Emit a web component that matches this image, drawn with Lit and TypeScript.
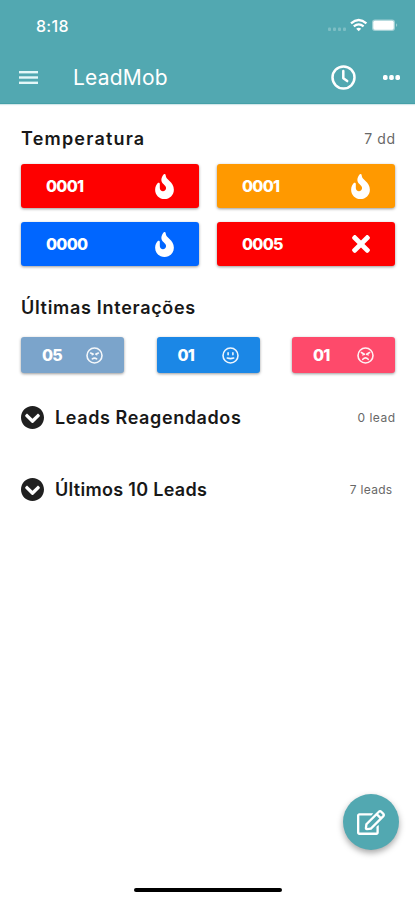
import { LitElement, html, css, svg } from "lit";
import { customElement, property } from "lit/decorators.js";

const FIRE = "M216 23.86c0-23.8-30.65-32.77-44.15-13.04C48 191.85 224 200 224 288c0 35.63-29.11 64.46-64.85 63.99-35.17-.45-63.15-29.77-63.15-64.94v-85.51c0-21.7-26.47-32.23-41.43-16.5C27.8 213.16 0 261.33 0 320c0 105.87 86.13 192 192 192s192-86.13 192-192c0-170.29-168-193-168-296.14z";
const TIMES = "M242.72 256l100.07-100.07c12.28-12.28 12.28-32.19 0-44.48l-22.24-22.24c-12.28-12.28-32.19-12.28-44.48 0L176 189.28 75.93 89.21c-12.28-12.28-32.19-12.28-44.48 0L9.21 111.45c-12.28 12.28-12.28 32.19 0 44.48L109.28 256 9.21 356.07c-12.28 12.28-12.28 32.19 0 44.48l22.24 22.24c12.28 12.28 32.2 12.28 44.48 0L176 322.72l100.07 100.07c12.28 12.28 32.2 12.28 44.48 0l22.24-22.24c12.28-12.28 12.28-32.19 0-44.48L242.72 256z";
const CHEVRON = "M504 256c0 137-111 248-248 248S8 393 8 256 119 8 256 8s248 111 248 248zM273 369.9l135.5-135.5c9.4-9.4 9.4-24.6 0-33.9l-17-17c-9.4-9.4-24.6-9.4-33.9 0L256 285.1 154.4 183.5c-9.4-9.4-24.6-9.4-33.9 0l-17 17c-9.4 9.4-9.4 24.6 0 33.9L239 369.9c9.4 9.4 24.6 9.4 34 0z";
const EDIT = "M402.3 344.9l32-32c5-5 13.7-1.5 13.7 5.7V464c0 26.5-21.5 48-48 48H48c-26.5 0-48-21.5-48-48V112c0-26.5 21.5-48 48-48h273.5c7.1 0 10.7 8.6 5.7 13.7l-32 32c-1.5 1.5-3.5 2.3-5.7 2.3H48v352h352V350.5c0-2.1.8-4.1 2.3-5.6zm156.6-201.8L296.3 405.7l-90.4 10c-26.2 2.9-48.5-19.2-45.6-45.6l10-90.4L432.9 17.1c22.9-22.9 59.9-22.9 82.7 0l43.2 43.2c22.9 22.9 22.9 60 .1 82.8zM460.1 174L402 115.9 216.2 301.8l-7.3 65.3 65.3-7.3L460.1 174zm64.8-79.7l-43.2-43.2c-4.1-4.1-10.8-4.1-14.8 0L436 82l58.1 58.1 30.9-30.9c4-4.2 4-10.8-.1-14.9z";

@customElement("mood-face")
class MoodFace extends LitElement {
  @property() mood = "angry";
  static styles = css`
    :host { display: block; width: 17px; height: 17px; }
    svg { display: block; fill: none; stroke: #fff; stroke-width: 1.6; stroke-linecap: round; opacity: 0.92; }
  `;
  render() {
    const parts: Record<string, unknown> = {
      annoyed: svg`<path d="M4.6 6l2.5 1.1M12.4 6L9.9 7.1M6.2 7.4v.4M10.8 7.4v.4M6.3 11.9q2.2-1.5 4.4 0"/>`,
      neutral: svg`<path d="M6.1 5.8v1.9M10.9 5.8v1.9M5.3 11.1q3.2 1 6.4 0"/>`,
      angry: svg`<path d="M4.4 5.5l3 1.8M12.6 5.5l-3 1.8M5.9 7.6v.4M11.1 7.6v.4M5.8 12.3q2.7-2.8 5.4 0"/>`,
    };
    return html`<svg width="17" height="17" viewBox="0 0 17 17"><circle cx="8.5" cy="8.5" r="7.5"/>${parts[this.mood]}</svg>`;
  }
}

@customElement("app-root")
class AppRoot extends LitElement {
  static styles = css`
    :host { display: block; }
    .screen { position: relative; box-sizing: border-box; width: 415px; height: 900px; overflow: hidden; background: #fff; color: #181818; font-family: Inter, "Open Sans", sans-serif; }
    svg { display: block; }
    header { height: 104px; background: #52a8b1; color: #fff; box-shadow: inset 0 -1px #45a0a8, 0 1px 1px #d4e8ea; }
    .status { display: flex; align-items: center; height: 50px; padding: 0 16px 0 36px; }
    .time { font-size: 16px; font-weight: 500; letter-spacing: 0.3px; padding-top: 1px; }
    .signals { margin-left: auto; display: flex; align-items: center; }
    .bar { display: flex; align-items: center; height: 54px; padding: 0 15px 0 19px; }
    .title { margin-left: 35px; font-size: 21px; line-height: 30px; flex: 1; letter-spacing: 0.2px; padding-top: 2px; }
    .more { margin-left: 27px; }
    main { padding: 0 20px 0 21px; }
    .head { display: flex; justify-content: space-between; align-items: center; height: 60px; padding-top: 9px; box-sizing: border-box; }
    .head.second { height: 71px; padding-top: 13px; }
    h2 { margin: 0; font-size: 18px; line-height: 24px; font-weight: 600; white-space: nowrap; }
    .temperature { letter-spacing: 1.2px; }
    .interactions { letter-spacing: 0.7px; }
    .note { font-size: 13px; color: #686868; }
    .days { font-size: 14px; letter-spacing: 0.6px; margin-right: -0.6px; }
    .grid { display: grid; grid-template-columns: 178px 178px; gap: 14px 18px; }
    .card { display: flex; align-items: center; justify-content: space-between; box-sizing: border-box; height: 44px; padding: 0 25px; border-radius: 3px; color: #fff; font-weight: 800; font-size: 16px; letter-spacing: -0.7px; box-shadow: 0 1px 3px rgba(0, 0, 0, 0.4); }
    .hot { background: #fe0000; }
    .warm { background: #ff9900; }
    .cold { background: #0066ff; }
    .moods { display: flex; justify-content: space-between; }
    .mood { width: 103px; height: 36px; padding: 0 21px; }
    .steel { background: #7ba4cb; }
    .azure { background: #1b87e6; }
    .rose { background: #fe4a6b; }
    .section { display: flex; align-items: center; height: 72px; }
    .section h2 { margin-left: 11px; flex: 1; padding-top: 2px; }
    .section .note { font-size: 12px; letter-spacing: 0.5px; padding-top: 1px; }
    .first { margin-top: 8px; }
    .first .note { margin-right: -0.5px; }
    .rescheduled { letter-spacing: 0.6px; }
    .latest { letter-spacing: 0.3px; }
    .last .note { margin-right: 2.5px; letter-spacing: 0.3px; }
    .fab { position: absolute; left: 343px; top: 794px; width: 56px; height: 56px; border-radius: 50%; background: #52a8b1; display: flex; align-items: center; justify-content: center; box-shadow: 0 3px 6px rgba(0, 0, 0, 0.35); }
    .home { position: absolute; left: 134px; top: 888px; width: 148px; height: 4px; border-radius: 2px; background: #000; }
  `;
  fire() {
    return html`<svg width="19" height="25" viewBox="0 0 384 512" fill="#fff"><path d=${FIRE} /></svg>`;
  }
  chevron() {
    return html`<svg width="23" height="23" viewBox="8 8 496 496" fill="#202020"><path d=${CHEVRON} /></svg>`;
  }
  render() {
    return html`<div class="screen">
      <header>
        <div class="status">
          <span class="time">8:18</span>
          <div class="signals">
            <svg width="72" height="14" viewBox="0 0 72 14" fill="#fff">
              <g opacity=".25"><rect x="1" y="9.5" width="3" height="3.5" rx="1"/><rect x="6" y="9.5" width="3" height="3.5" rx="1"/><rect x="11" y="9.5" width="3" height="3.5" rx="1"/><rect x="16" y="9.5" width="3" height="3.5" rx="1"/></g>
              <g fill="none" stroke="#fff" stroke-width="2.3"><path d="M24 5.4Q31.7-1.4 39.4 5.4M26.8 8.4Q31.7 4.3 36.6 8.4"/></g>
              <path d="M29.2 10.7q2.5-2 5 0l-2.5 2.6z"/>
              <rect x="45" y="1.5" width="23" height="11.5" rx="3" opacity=".45"/><rect x="46.3" y="2.8" width="20.4" height="8.9" rx="1.6"/>
              <path d="M69.2 5.3q2 1.8 0 3.8z" opacity=".5"/>
            </svg>
          </div>
        </div>
        <div class="bar">
          <svg width="19" height="13" viewBox="0 0 19 13" fill="#e4f7f8"><rect y="0" width="19" height="2.4"/><rect y="5.3" width="19" height="2.4"/><rect y="10.6" width="19" height="2.4"/></svg>
          <span class="title">LeadMob</span>
          <svg width="25" height="25" viewBox="0 0 25 25" fill="none" stroke="#fff"><circle cx="12.5" cy="12.5" r="11" stroke-width="2.5"/><path d="M12.3 6v7.3l3.9 2.8" stroke-width="2.5" stroke-linecap="round" stroke-linejoin="round"/></svg>
          <svg class="more" width="17" height="5" viewBox="0 0 17 5" fill="#fff"><rect width="4.6" height="5" rx="1.7"/><rect x="6.2" width="4.6" height="5" rx="1.7"/><rect x="12.4" width="4.6" height="5" rx="1.7"/></svg>
        </div>
      </header>
      <main>
        <div class="head"><h2 class="temperature">Temperatura</h2><span class="note days">7 dd</span></div>
        <div class="grid">
          <div class="card hot"><span>0001</span>${this.fire()}</div>
          <div class="card warm"><span>0001</span>${this.fire()}</div>
          <div class="card cold"><span>0000</span>${this.fire()}</div>
          <div class="card hot"><span>0005</span><svg width="18" height="26" viewBox="0 0 352 512" fill="#fff"><path d=${TIMES} /></svg></div>
        </div>
        <div class="head second"><h2 class="interactions">Últimas Interações</h2></div>
        <div class="moods">
          <div class="card mood steel"><span>05</span><mood-face mood="annoyed"></mood-face></div>
          <div class="card mood azure"><span>01</span><mood-face mood="neutral"></mood-face></div>
          <div class="card mood rose"><span>01</span><mood-face mood="angry"></mood-face></div>
        </div>
        <div class="section first">${this.chevron()}<h2 class="rescheduled">Leads Reagendados</h2><span class="note">0 lead</span></div>
        <div class="section last">${this.chevron()}<h2 class="latest">Últimos 10 Leads</h2><span class="note">7 leads</span></div>
      </main>
      <div class="fab"><svg width="28" height="25" viewBox="0 0 576 512" fill="#fff"><path d=${EDIT} /></svg></div>
      <div class="home"></div>
    </div>`;
  }
}
